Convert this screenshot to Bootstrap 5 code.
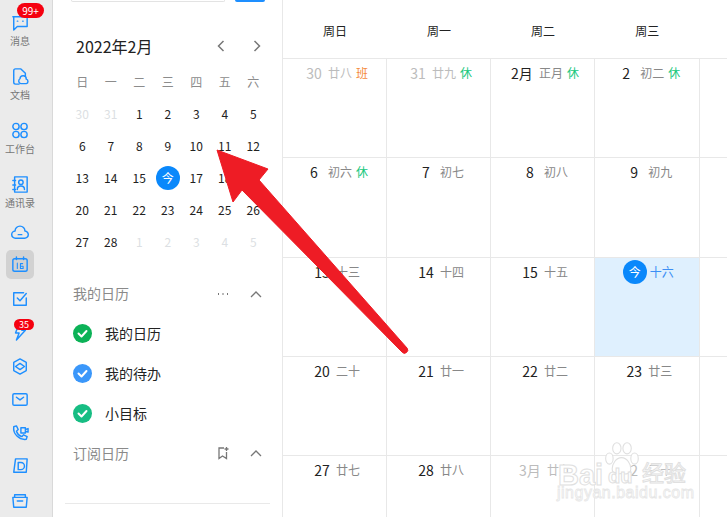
<!DOCTYPE html>
<html lang="zh-CN">
<head>
<meta charset="UTF-8">
<title>日历</title>
<link href="https://cdn.jsdelivr.net/npm/bootstrap@5.3.0/dist/css/bootstrap.min.css" rel="stylesheet">
<style>
html,body{height:517px;overflow:hidden}
body{font-family:"Noto Sans CJK SC","Liberation Sans",sans-serif;color:#222;background:#fff;position:relative}
.app-wrap{width:727px;height:517px;overflow:hidden}
.side-bar{width:53px;flex:none;background:#ebebeb;border-right:1px solid #d9d9d9;padding:14px 12px 0 0;position:relative}
.side-top{gap:16.5px;margin-bottom:1.5px}
.side-lab{height:37.5px;font-size:10px;line-height:12px;color:#777;white-space:nowrap}
.side-lab svg{margin-bottom:4px}
.side-ico{height:34px}
.side-ico.is-on{height:30px;width:28px;margin:1px auto 3px;background:#d2d2d2;border-radius:5px;padding-top:1px}
.side-ico svg,.side-lab svg{width:18px;height:17px;fill:none;stroke:#1e8fff;stroke-width:1.6;stroke-linejoin:round;stroke-linecap:round;flex:none}
.red-tag{position:absolute;background:#f5000f;color:#fff;border-radius:8px;text-align:center}
.tag-a{left:17px;top:3px;width:27px;height:15px;font-size:10px;line-height:15px}
.tag-b{left:14px;top:319px;width:20px;height:11px;font-size:9px;line-height:11px;border-radius:6px}
.mid-panel{width:230px;flex:none;border-right:1px solid #e8e8e8;padding:0 12px 0 12px;position:relative}
.top-search{height:2px}
.fake-input{width:154px;margin-left:6px;height:2px;border:1px solid #e3e3e3;border-top:0;border-radius:0 0 4px 4px}
.fake-btn{width:30px;height:2px;background:#1e8fff;margin-left:10px;border-radius:0 0 4px 4px}
.month-row{margin:32px 0 0 11px;height:24px;font-size:16px;line-height:24px;color:#222}
.month-row svg{width:12px;height:14px;fill:none;stroke:#777;stroke-width:1.5}
.arrows{gap:24px;margin-right:7px}
.mini-grid{display:grid;grid-template-columns:repeat(7,28.5px);grid-auto-rows:32px;margin:8px 0 0 3px;font-size:12px;text-align:center;line-height:32px}
.mini-week{color:#8c8c8c}
.mini-off{color:#dcdfe3}
.mini-today{width:24px;height:24px;line-height:24px;border-radius:50%;background:#0a88fb;color:#fff;margin:4px auto 0}
.sec-head{height:40px;margin-left:8px;font-size:14px;color:#8a8a8a}
.sec-first{margin-top:16px;height:39px}
.sec-head svg{width:14px;height:14px;fill:none;stroke:#777;stroke-width:1.3}
.sec-tools{gap:19px;margin-right:7px}
.cal-list{height:40px;margin-left:8px;gap:13px;font-size:14px;color:#222}
.chk{width:19px;height:19px;border-radius:50%;flex:none}
.chk svg{width:19px;height:19px;display:block;fill:none;stroke:#fff;stroke-width:2;stroke-linecap:round;stroke-linejoin:round}
.c-green{background:#0cb257}
.c-blue{background:#3b97fa}
.c-teal{background:#17bd83}
.panel-line{position:absolute;left:12px;right:12px;top:503px;border-top:1px solid #e9e9e9}
.cal-main{flex:1;min-width:0;overflow:hidden}
.week-head{height:58px;display:grid;grid-template-columns:104px 104px 104px 104.5px 120px;font-size:12px;text-align:center;line-height:58px;padding-top:2px;color:#222}
.month-grid{display:grid;grid-template-columns:104px 104px 104px 104.5px 120px;grid-auto-rows:99.25px;border-top:1px solid #e8e8e8}
.day-cell{border-right:1px solid #e8e8e8;border-bottom:1px solid #e8e8e8;padding:2px 0 0 5px;font-size:14px;line-height:24px;white-space:nowrap}
.num-box{min-width:16px;margin-right:6px;text-align:center}
.lunar-txt{font-size:12px;color:#888}
.rest-tag{font-size:12px;color:#16c77c;margin-left:4px}
.work-tag{font-size:12px;color:#f58a3c;margin-left:4px}
.off-day .num-box,.off-day .lunar-txt{color:#bcbcbc}
.today-cell{background:#dff0fe}
.today-cell .lunar-txt{color:#3c8ff5}
.today-dot{width:24px;height:24px;line-height:24px;border-radius:50%;background:#0a88fb;color:#fff;font-size:12px;text-align:center;margin-right:3px;margin-left:-2px}
.arrow-over{position:absolute;left:0;top:0;pointer-events:none}
.wm-mark{position:absolute;left:558px;top:439px;width:140px;height:72px;color:#fff;pointer-events:none}
.wm-big{position:absolute;left:0;top:20px;font:bold 29px/32px "Liberation Sans",sans-serif;-webkit-text-stroke:1px #e0e0e0}
.wm-du{position:absolute;left:50px;top:25px;font:bold 20px/24px "Liberation Sans",sans-serif;-webkit-text-stroke:1px #e0e0e0}
.wm-cn{position:absolute;left:84px;top:19px;font-size:22px;line-height:26px;-webkit-text-stroke:1px #e0e0e0}
.wm-url{position:absolute;left:-1px;top:45px;font:16px/18px "Liberation Sans",sans-serif;-webkit-text-stroke:.8px #e6e6e6;letter-spacing:.5px}
.wm-paw{position:absolute;left:43px;top:0;width:41px;height:41px;fill:#fff;stroke:#e0e0e0;stroke-width:1.2}
</style>
</head>
<body>
<div class="d-flex app-wrap">
  <div class="side-bar d-flex flex-column">
    <div class="side-top d-flex flex-column">
      <div class="side-lab d-flex flex-column align-items-center"><svg viewBox="0 0 20 19"><path d="M2 3h16v11H7l-4 4V3z"/><path d="M7 8h.5M13 8h.5"/></svg>消息</div>
      <div class="side-lab d-flex flex-column align-items-center"><svg viewBox="0 0 20 19"><path d="M9 18H5a2 2 0 0 1-2-2V3a2 2 0 0 1 2-2h6l5 5v3"/><path d="M11 17.500a3 3 0 0 1-1-5.500 3.500 3.500 0 0 1 7 .5 2.600 2.600 0 0 1 0 5z"/></svg>文档</div>
      <div class="side-lab d-flex flex-column align-items-center"><svg viewBox="0 0 20 19"><circle cx="5.500" cy="5" r="3.500"/><circle cx="14.500" cy="5" r="3.500"/><circle cx="5.500" cy="14" r="3.500"/><circle cx="14.500" cy="14" r="3.500"/></svg>工作台</div>
      <div class="side-lab d-flex flex-column align-items-center"><svg viewBox="0 0 20 19"><path d="M4 1h14v17H4z"/><circle cx="11" cy="7" r="2.500"/><path d="M7 15c0-5 8-5 8 0M2 5h3M2 10h3M2 15h3"/></svg>通讯录</div>
    </div>
    <div class="side-ico d-flex align-items-center justify-content-center"><svg viewBox="0 0 20 19"><path d="M5 17a4 4 0 0 1-.5-8 5.500 5.500 0 0 1 11 0 4 4 0 0 1-.5 8z"/><path d="M8 13h4"/></svg></div>
    <div class="side-ico is-on d-flex align-items-center justify-content-center"><svg viewBox="0 0 20 19"><rect x="2" y="3" width="16" height="14" rx="2"/><path d="M6 1v3M14 1v3"/><path d="M7 8v6M10.500 14V8.500h2.500M10.500 11.500h3v2.500h-3" stroke-width="1.200"/></svg></div>
    <div class="side-ico d-flex align-items-center justify-content-center"><svg viewBox="0 0 20 19"><path d="M17 9v8H3V3h11"/><path d="M7 9l3 3 7-8"/></svg></div>
    <div class="side-ico d-flex align-items-center justify-content-center"><svg viewBox="0 0 20 19"><path d="M8 2l-3 8h4l-3 8 10-11h-4"/></svg></div>
    <div class="side-ico d-flex align-items-center justify-content-center"><svg viewBox="0 0 20 19"><path d="M10 1l7 4v9l-7 4-7-4V5z"/><path d="M10 6l5 3.500-5 3.500-5-3.500z"/></svg></div>
    <div class="side-ico d-flex align-items-center justify-content-center"><svg viewBox="0 0 20 19"><rect x="2" y="3" width="16" height="13" rx="1.500"/><path d="M6 7l4 3 4-3"/></svg></div>
    <div class="side-ico d-flex align-items-center justify-content-center"><svg viewBox="0 0 20 19"><path d="M3 2l3-1 2 4-2 2c1 3 3 5 6 6l2-2 4 2-1 3c-8 1-15-6-14-14z"/><path d="M11 3h5v6h-5zM16 5l3-1v4l-3-1"/></svg></div>
    <div class="side-ico d-flex align-items-center justify-content-center"><svg viewBox="0 0 20 19"><path d="M5 1h13l-1 15H3z"/><path d="M8 5h3a3.500 3.500 0 0 1 0 8H8z"/></svg></div>
    <div class="side-ico d-flex align-items-center justify-content-center"><svg viewBox="0 0 20 19"><path d="M4 6V3h12v3"/><path d="M2 6h16l-1 11H3z"/><path d="M7 10h6"/></svg></div>
    <span class="red-tag tag-a">99+</span>
    <span class="red-tag tag-b">35</span>
  </div>

  <div class="mid-panel">
    <div class="top-search d-flex"><div class="fake-input"></div><div class="fake-btn"></div></div>
    <div class="month-row d-flex justify-content-between align-items-center">
      <span>2022年2月</span>
      <span class="arrows d-flex"><svg viewBox="0 0 12 14"><path d="M8.500 2L3.500 7l5 5"/></svg><svg viewBox="0 0 12 14"><path d="M3.500 2l5 5-5 5"/></svg></span>
    </div>
    <div class="mini-grid">
      <div class="mini-week">日</div><div class="mini-week">一</div><div class="mini-week">二</div><div class="mini-week">三</div><div class="mini-week">四</div><div class="mini-week">五</div><div class="mini-week">六</div>
      <div class="mini-off">30</div><div class="mini-off">31</div><div>1</div><div>2</div><div>3</div><div>4</div><div>5</div>
      <div>6</div><div>7</div><div>8</div><div>9</div><div>10</div><div>11</div><div>12</div>
      <div>13</div><div>14</div><div>15</div><div><div class="mini-today">今</div></div><div>17</div><div>18</div><div>19</div>
      <div>20</div><div>21</div><div>22</div><div>23</div><div>24</div><div>25</div><div>26</div>
      <div>27</div><div>28</div><div class="mini-off">1</div><div class="mini-off">2</div><div class="mini-off">3</div><div class="mini-off">4</div><div class="mini-off">5</div>
    </div>
    <div class="sec-head sec-first d-flex justify-content-between align-items-center">
      <span>我的日历</span>
      <span class="sec-tools d-flex"><svg viewBox="0 0 14 14"><path d="M2 7h1M6.500 7h1M11 7h1" stroke-width="2"/></svg><svg viewBox="0 0 14 14"><path d="M2 10l5-5 5 5"/></svg></span>
    </div>
    <div class="cal-list d-flex align-items-center"><span class="chk c-green"><svg viewBox="0 0 19 19"><path d="M5.500 9.500l3 3 5-5.500"/></svg></span>我的日历</div>
    <div class="cal-list d-flex align-items-center"><span class="chk c-blue"><svg viewBox="0 0 19 19"><path d="M5.500 9.500l3 3 5-5.500"/></svg></span>我的待办</div>
    <div class="cal-list d-flex align-items-center"><span class="chk c-teal"><svg viewBox="0 0 19 19"><path d="M5.500 9.500l3 3 5-5.500"/></svg></span>小目标</div>
    <div class="sec-head d-flex justify-content-between align-items-center">
      <span>订阅日历</span>
      <span class="sec-tools d-flex"><svg viewBox="0 0 14 14"><path d="M8 2H3v10.500l3.500-2.500 4 2.500V6M10.500 1v4M8.500 3h4"/></svg><svg viewBox="0 0 14 14"><path d="M2 10l5-5 5 5"/></svg></span>
    </div>
    <div class="panel-line"></div>
  </div>

  <div class="cal-main">
    <div class="week-head"><div>周日</div><div>周一</div><div>周二</div><div>周三</div><div>周四</div></div>
    <div class="month-grid">
      <div class="day-cell off-day d-flex justify-content-center"><span class="num-box">30</span><span class="lunar-txt">廿八</span><span class="work-tag">班</span></div>
      <div class="day-cell off-day d-flex justify-content-center"><span class="num-box">31</span><span class="lunar-txt">廿九</span><span class="rest-tag">休</span></div>
      <div class="day-cell d-flex justify-content-center"><span class="num-box">2月</span><span class="lunar-txt">正月</span><span class="rest-tag">休</span></div>
      <div class="day-cell d-flex justify-content-center"><span class="num-box">2</span><span class="lunar-txt">初二</span><span class="rest-tag">休</span></div>
      <div class="day-cell d-flex justify-content-center"><span class="num-box">3</span><span class="lunar-txt">初三</span><span class="rest-tag">休</span></div>

      <div class="day-cell d-flex justify-content-center"><span class="num-box">6</span><span class="lunar-txt">初六</span><span class="rest-tag">休</span></div>
      <div class="day-cell d-flex justify-content-center"><span class="num-box">7</span><span class="lunar-txt">初七</span></div>
      <div class="day-cell d-flex justify-content-center"><span class="num-box">8</span><span class="lunar-txt">初八</span></div>
      <div class="day-cell d-flex justify-content-center"><span class="num-box">9</span><span class="lunar-txt">初九</span></div>
      <div class="day-cell d-flex justify-content-center"><span class="num-box">10</span><span class="lunar-txt">初十</span></div>

      <div class="day-cell d-flex justify-content-center"><span class="num-box">13</span><span class="lunar-txt">十三</span></div>
      <div class="day-cell d-flex justify-content-center"><span class="num-box">14</span><span class="lunar-txt">十四</span></div>
      <div class="day-cell d-flex justify-content-center"><span class="num-box">15</span><span class="lunar-txt">十五</span></div>
      <div class="day-cell today-cell d-flex justify-content-center"><span class="today-dot">今</span><span class="lunar-txt">十六</span></div>
      <div class="day-cell d-flex justify-content-center"><span class="num-box">17</span><span class="lunar-txt">十七</span></div>

      <div class="day-cell d-flex justify-content-center"><span class="num-box">20</span><span class="lunar-txt">二十</span></div>
      <div class="day-cell d-flex justify-content-center"><span class="num-box">21</span><span class="lunar-txt">廿一</span></div>
      <div class="day-cell d-flex justify-content-center"><span class="num-box">22</span><span class="lunar-txt">廿二</span></div>
      <div class="day-cell d-flex justify-content-center"><span class="num-box">23</span><span class="lunar-txt">廿三</span></div>
      <div class="day-cell d-flex justify-content-center"><span class="num-box">24</span><span class="lunar-txt">廿四</span></div>

      <div class="day-cell d-flex justify-content-center"><span class="num-box">27</span><span class="lunar-txt">廿七</span></div>
      <div class="day-cell d-flex justify-content-center"><span class="num-box">28</span><span class="lunar-txt">廿八</span></div>
      <div class="day-cell off-day d-flex justify-content-center"><span class="num-box">3月</span><span class="lunar-txt">廿九</span></div>
      <div class="day-cell off-day d-flex justify-content-center"><span class="num-box">2</span><span class="lunar-txt">三十</span></div>
      <div class="day-cell off-day d-flex justify-content-center"><span class="num-box">3</span><span class="lunar-txt">初一</span></div>
    </div>
  </div>
</div>

<div class="wm-mark">
  <svg class="wm-paw" viewBox="0 0 44 44"><ellipse cx="9" cy="21" rx="4" ry="6"/><ellipse cx="17" cy="10" rx="4.500" ry="6"/><ellipse cx="28" cy="10" rx="4.500" ry="6"/><ellipse cx="36" cy="21" rx="4" ry="6"/><path d="M22 20c-6 0-10 7-10 12 0 6 6 6 10 5 4 1 10 1 10-5 0-5-4-12-10-12z"/></svg>
  <span class="wm-big">Bai</span><span class="wm-du">du</span><span class="wm-cn">经验</span>
  <span class="wm-url">jingyan.baidu.com</span>
</div>

<svg class="arrow-over" width="727" height="517" viewBox="0 0 727 517">
  <path d="M217 150L268 169 259 180 407 348a3 3 0 0 1-5 4L242 190 233 202z" fill="#ee1c25" stroke="#ee1c25" stroke-width="1" stroke-linejoin="round"/>
</svg>

<script src="https://cdn.jsdelivr.net/npm/bootstrap@5.3.0/dist/js/bootstrap.bundle.min.js"></script>
</body>
</html>
